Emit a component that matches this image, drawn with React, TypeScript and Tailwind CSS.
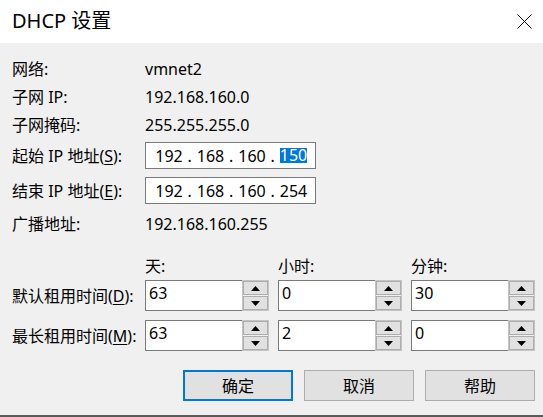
import React from "react";

const font = { fontFamily: '"Noto Sans", "Noto Sans CJK SC", sans-serif' };

function Tri({ up }: { up?: boolean }) {
  return (
    <svg width="9" height="5" viewBox="0 0 9 5">
      {up ? <polygon points="4.5,0 9,5 0,5" fill="#000" /> : <polygon points="0,0 9,0 4.5,5" fill="#000" />}
    </svg>
  );
}

function Spin({ value }: { value: string }) {
  return (
    <div className="flex h-[31px] w-[124px]">
      <div className="flex-1 border border-r-0 border-[#7a7a7a] bg-white pl-[3px] pt-[2px] text-[16px] leading-[20px] text-black">
        {value}
      </div>
      <div className="flex w-[27px] flex-col gap-px border border-[#c4c4c4] bg-[#f0f0f0] p-0">
        <div className="flex h-[14px] items-center justify-center border border-[#adadad] bg-[#e1e1e1]">
          <Tri up />
        </div>
        <div className="flex h-[14px] items-center justify-center border border-[#adadad] bg-[#e1e1e1]">
          <Tri />
        </div>
      </div>
    </div>
  );
}

function IpBox({ parts, highlightLast }: { parts: string[]; highlightLast?: boolean }) {
  return (
    <div className="flex h-[27px] w-[171px] items-center border border-[#7a7a7a] bg-white pl-[6px] text-[16px] text-black">
      {parts.map((p, i) => (
        <React.Fragment key={i}>
          <div className="flex w-[34px] justify-center">
            {highlightLast && i === 3 ? (
              <span className="bg-[#0078d7] leading-[15px] text-white">{p}</span>
            ) : (
              <span>{p}</span>
            )}
          </div>
          {i < 3 && <div className="w-[7.5px] text-center">.</div>}
        </React.Fragment>
      ))}
    </div>
  );
}

function Btn({ label, primary }: { label: string; primary?: boolean }) {
  return (
    <div
      className={
        "flex h-[31px] w-[110px] items-center justify-center bg-[#e1e1e1] text-[16px] text-black " +
        (primary ? "border-2 border-[#0078d7]" : "border border-[#adadad]")
      }
    >
      {label}
    </div>
  );
}

export default function App() {
  return (
    <div className="flex h-[417px] w-[543px] flex-col overflow-hidden bg-[#f0f0f0] text-black" style={font}>
      <div className="relative flex h-[43px] items-center bg-white pl-[12px] text-[20px]">
        <span className="-mt-[2px]">DHCP 设置</span>
        <svg className="absolute left-[517px] top-[14px]" width="15" height="15" viewBox="0 0 15 15">
          <path d="M0.5 0.5 L14.5 14.5 M14.5 0.5 L0.5 14.5" stroke="#000" strokeWidth="1" fill="none" />
        </svg>
      </div>

      <div className="flex flex-col pl-[12px] pt-[12px] text-[16px]">
        <div className="flex h-[28px] items-center">
          <div className="w-[133px]">网络:</div>
          <div>vmnet2</div>
        </div>
        <div className="flex h-[27px] items-center">
          <div className="w-[133px]">子网 IP:</div>
          <div>192.168.160.0</div>
        </div>
        <div className="flex h-[29px] items-center">
          <div className="w-[133px]">子网掩码:</div>
          <div>255.255.255.0</div>
        </div>
        <div className="mt-[3px] flex items-center">
          <div className="w-[133px]">
            起始 IP 地址(<span className="underline underline-offset-2">S</span>):
          </div>
          <IpBox parts={["192", "168", "160", "150"]} highlightLast />
        </div>
        <div className="mt-[8px] flex items-center">
          <div className="w-[133px]">
            结束 IP 地址(<span className="underline underline-offset-2">E</span>):
          </div>
          <IpBox parts={["192", "168", "160", "254"]} />
        </div>
        <div className="flex h-[40px] items-center">
          <div className="w-[133px]">广播地址:</div>
          <div>192.168.160.255</div>
        </div>

        <div className="mt-[11px] flex h-[22px] items-center pl-[133px]">
          <div className="w-[133px]">天:</div>
          <div className="w-[133px]">小时:</div>
          <div>分钟:</div>
        </div>
        <div className="mt-[3px] flex items-center">
          <div className="w-[133px]">
            默认租用时间(<span className="underline underline-offset-2">D</span>):
          </div>
          <div className="flex gap-[9px]">
            <Spin value="63" />
            <Spin value="0" />
            <Spin value="30" />
          </div>
        </div>
        <div className="mt-[9px] flex items-center">
          <div className="w-[133px]">
            最长租用时间(<span className="underline underline-offset-2">M</span>):
          </div>
          <div className="flex gap-[9px]">
            <Spin value="63" />
            <Spin value="2" />
            <Spin value="0" />
          </div>
        </div>

        <div className="mt-[19px] flex justify-end gap-[11px] pr-[8px]">
          <Btn label="确定" primary />
          <Btn label="取消" />
          <Btn label="帮助" />
        </div>
      </div>

      <div className="mt-auto h-[2px] bg-[#5a5a5a]" />
    </div>
  );
}
